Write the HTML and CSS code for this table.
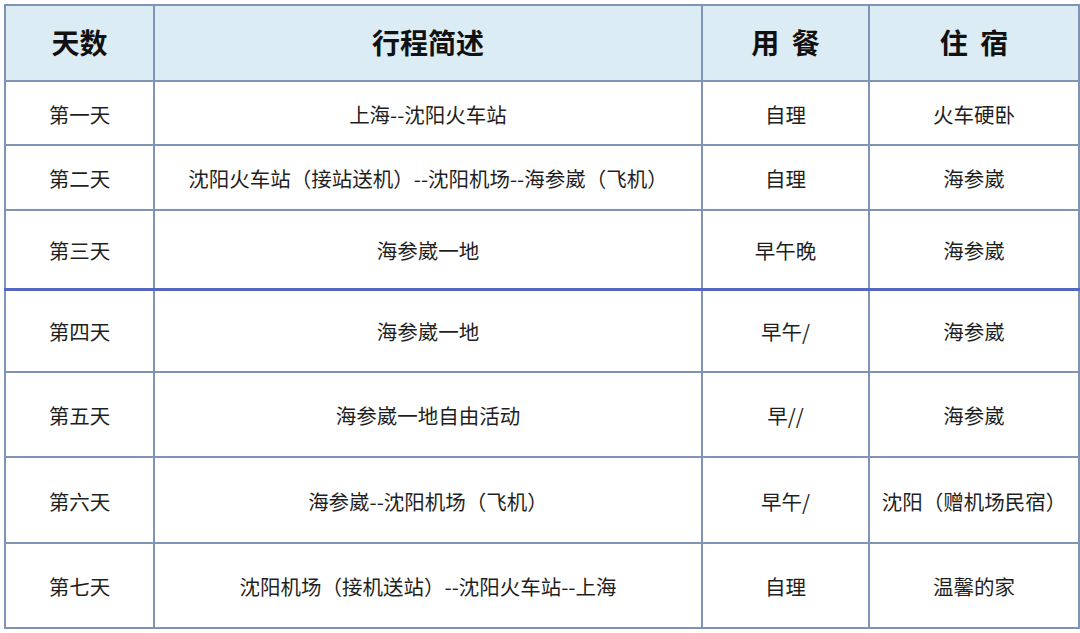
FILE: index.html
```html
<!DOCTYPE html>
<html lang="zh">
<head>
<meta charset="utf-8">
<link rel="stylesheet" href="styles.css">
</head>
<body>
<table class="trip">
  <colgroup>
    <col class="c-day">
    <col class="c-route">
    <col class="c-meal">
    <col class="c-stay">
  </colgroup>
  <thead>
    <tr class="r-head">
      <th>天数</th>
      <th>行程简述</th>
      <th>用&nbsp;&nbsp;餐</th>
      <th>住&nbsp;&nbsp;宿</th>
    </tr>
  </thead>
  <tbody>
    <tr class="r1">
      <td>第一天</td>
      <td>上海--沈阳火车站</td>
      <td>自理</td>
      <td>火车硬卧</td>
    </tr>
    <tr class="r2">
      <td>第二天</td>
      <td>沈阳火车站（接站送机）--沈阳机场--海参崴（飞机）</td>
      <td>自理</td>
      <td>海参崴</td>
    </tr>
    <tr class="r3">
      <td>第三天</td>
      <td>海参崴一地</td>
      <td>早午晚</td>
      <td>海参崴</td>
    </tr>
    <tr class="r4">
      <td>第四天</td>
      <td>海参崴一地</td>
      <td>早午/</td>
      <td>海参崴</td>
    </tr>
    <tr class="r5">
      <td>第五天</td>
      <td>海参崴一地自由活动</td>
      <td>早//</td>
      <td>海参崴</td>
    </tr>
    <tr class="r6">
      <td>第六天</td>
      <td>海参崴--沈阳机场（飞机）</td>
      <td>早午/</td>
      <td>沈阳（赠机场民宿）</td>
    </tr>
    <tr class="r7">
      <td>第七天</td>
      <td>沈阳机场（接机送站）--沈阳火车站--上海</td>
      <td>自理</td>
      <td>温馨的家</td>
    </tr>
  </tbody>
</table>
</body>
</html>
```

FILE: styles.css
```css
html, body {
  margin: 0;
  padding: 0;
  background: #ffffff;
}
body {
  padding: 4px 0 0 4px;
  font-family: "Noto Sans CJK SC", "Noto Sans", sans-serif;
  color: #1f1f1f;
}
.trip {
  border-collapse: collapse;
  table-layout: fixed;
  width: 1074px;
}
.c-day { width: 149px; }
.c-route { width: 548px; }
.c-meal { width: 167px; }
.c-stay { width: 210px; }
.trip th, .trip td {
  border: 2px solid #7f93b6;
  text-align: center;
  vertical-align: middle;
  padding: 0;
  line-height: 1.2;
}
.trip th {
  background: #dcecf4;
  font-size: 28px;
  font-weight: 700;
  color: #111;
}
.trip td {
  font-size: 20.5px;
  font-weight: 400;
  padding-top: 2px;
}
.r-head { height: 76px; }
.r1 { height: 64px; }
.r2 { height: 65px; }
.r3 { height: 79px; }
.r4 { height: 83px; }
.r5 { height: 85px; }
.r6 { height: 86px; }
.r7 { height: 85px; }
.r4 td { border-top: 3px solid #5366c2; }
```
